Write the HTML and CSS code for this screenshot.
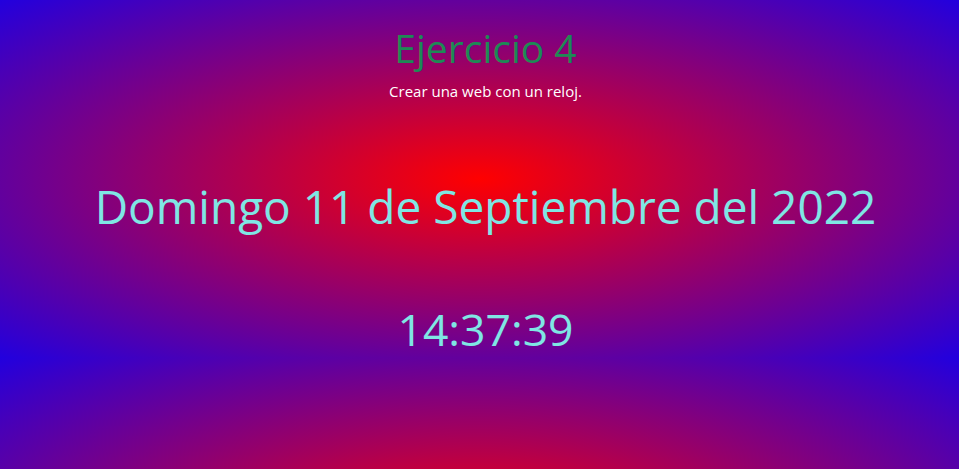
FILE: index.html
```html
<!DOCTYPE html>
<html lang="es">
<head>
<meta charset="utf-8">
<title>Ejercicio 4</title>
<link rel="stylesheet" href="styles.css">
</head>
<body>
<header class="header">
  <h1 class="title">Ejercicio 4</h1>
  <p class="subtitle">Crear una web con un reloj.</p>
</header>
<main class="clock">
  <p class="date">Domingo 11 de Septiembre del 2022</p>
  <p class="time">14:37:39</p>
</main>
</body>
</html>
```

FILE: styles.css
```css
html {
  background: radial-gradient(#ff0000, #2200de);
  background-size: 100% 358px;
  background-repeat: repeat;
  min-height: 100%;
}
body {
  margin: 0;
  padding: 28px 0 0 12px;
  font-family: "Open Sans", "Noto Sans", sans-serif;
  text-align: center;
}
.header {
  display: flex;
  flex-direction: column;
  align-items: center;
  gap: 13px;
}
.title {
  margin: 0;
  font-size: 39px;
  font-weight: 500;
  line-height: 40px;
  color: #1d8a55;
}
.subtitle {
  margin: 0;
  font-size: 15px;
  line-height: 20px;
  color: #fff;
}
.clock {
  display: flex;
  flex-direction: column;
  align-items: center;
  padding-top: 75px;
  gap: 63px;
}
.date, .time {
  margin: 0;
  line-height: 60px;
  color: #7fe6e4;
}
.date {
  font-size: 46px;
}
.time {
  font-size: 44.5px;
}
```
